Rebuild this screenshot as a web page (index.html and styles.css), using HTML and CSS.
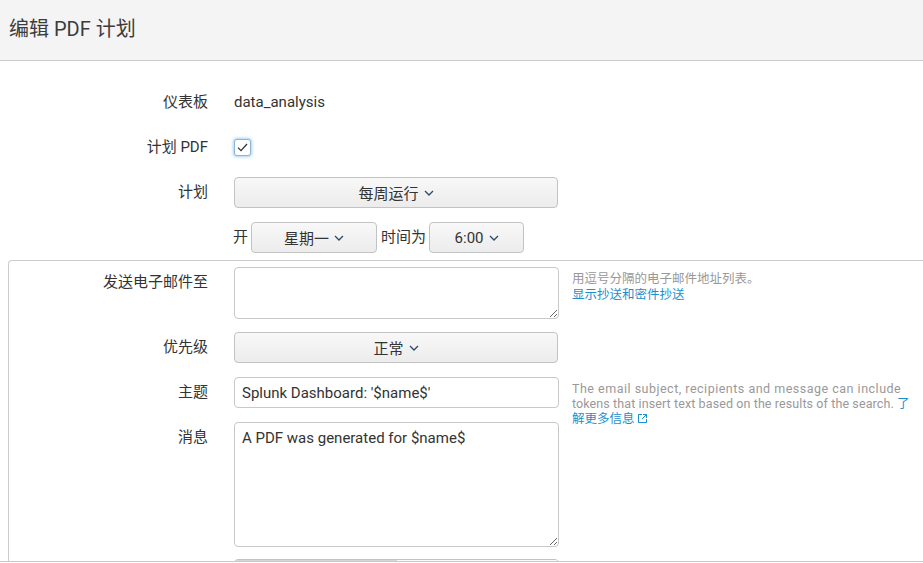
FILE: index.html
```
<!DOCTYPE html>
<html lang="zh-CN">
<head>
    <meta charset="UTF-8">
    <meta name="viewport" content="width=device-width, initial-scale=1.0">
    <title>编辑 PDF 计划</title>
    <link rel="stylesheet" href="styles.css">
</head>
<body>
    <div class="modal">
        <div class="modal-header">
            <h2>编辑 PDF 计划</h2>
        </div>

        <div class="modal-body">
            <div class="row">
                <div class="label">仪表板</div>
                <div class="value">data_analysis</div>
            </div>

            <div class="row">
                <div class="label">计划 PDF</div>
                <div class="value">
                    <span class="checkbox">
                        <svg width="11" height="9" viewBox="0 0 11 9"><path d="M1 4.6l3 3L10 1" fill="none" stroke="#333" stroke-width="1.3"/></svg>
                    </span>
                </div>
            </div>

            <div class="row">
                <div class="label">计划</div>
                <button class="dropdown wide">每周运行 <svg class="caret" width="10" height="6" viewBox="0 0 10 6"><path d="M1 1l4 4 4-4" fill="none" stroke="#2b4a6a" stroke-width="1.3"/></svg></button>
            </div>

            <div class="row last">
                <div class="label"></div>
                <div class="inline">
                    <span class="word">开</span>
                    <button class="dropdown day">星期一 <svg class="caret" width="10" height="6" viewBox="0 0 10 6"><path d="M1 1l4 4 4-4" fill="none" stroke="#2b4a6a" stroke-width="1.3"/></svg></button>
                    <span class="word">时间为</span>
                    <button class="dropdown time">6:00 <svg class="caret" width="10" height="6" viewBox="0 0 10 6"><path d="M1 1l4 4 4-4" fill="none" stroke="#2b4a6a" stroke-width="1.3"/></svg></button>
                </div>
            </div>

            <div class="panel">
                <div class="row">
                    <div class="label">发送电子邮件至</div>
                    <textarea class="field email"></textarea>
                    <div class="help">
                        用逗号分隔的电子邮件地址列表。<br>
                        <a href="#">显示抄送和密件抄送</a>
                    </div>
                </div>

                <div class="row">
                    <div class="label">优先级</div>
                    <button class="dropdown wide">正常 <svg class="caret" width="10" height="6" viewBox="0 0 10 6"><path d="M1 1l4 4 4-4" fill="none" stroke="#2b4a6a" stroke-width="1.3"/></svg></button>
                </div>

                <div class="row">
                    <div class="label">主题</div>
                    <input class="field" type="text" value="Splunk Dashboard: '$name$'">
                    <div class="help tokens">
                        <span class="en wide-line">The email subject, recipients and message can include</span><br><span class="en">tokens that insert text based on the results of the search.</span> <a href="#">了<br>解更多信息 <svg width="9" height="9" viewBox="0 0 9 9"><path d="M4 0.5H0.5v8h8V5" fill="none" stroke="#1a8fcf" stroke-width="1"/><path d="M5 0.5h3.5V4M8.5 0.5L4 5" fill="none" stroke="#1a8fcf" stroke-width="1"/></svg></a>
                    </div>
                </div>

                <div class="row">
                    <div class="label">消息</div>
                    <textarea class="field message">A PDF was generated for $name$</textarea>
                </div>

                <div class="row">
                    <div class="label"></div>
                    <div class="segmented">
                        <span class="seg on"></span>
                        <span class="seg"></span>
                    </div>
                </div>
            </div>
        </div>

        <div class="modal-footer"></div>
    </div>
</body>
</html>
```

FILE: styles.css
```
body {
    margin: 0;
    padding: 0;
    font-family: Roboto, "Noto Sans CJK SC", sans-serif;
    font-size: 15px;
    color: #333;
    background-color: #fff;
    overflow: hidden;
}

.modal {
    height: 563px;
    display: flex;
    flex-direction: column;
    overflow: hidden;
}

.modal-header {
    height: 60px;
    background-color: #f4f4f4;
    border-bottom: 1px solid #ccc;
    padding-left: 9px;
    display: flex;
    align-items: center;
    flex-shrink: 0;
}

.modal-header h2 {
    margin: 0 0 6px 0;
    font-size: 20px;
    font-weight: normal;
    color: #3c3c3c;
}

.modal-body {
    flex: 1;
    overflow: hidden;
    padding-top: 26px;
}

.modal-footer {
    height: 1px;
    border-top: 1px solid #c8c8c8;
    background-color: #fff;
    flex-shrink: 0;
}

.row {
    display: flex;
    align-items: flex-start;
    height: 31px;
    margin-bottom: 14px;
}

.row.last {
    margin-bottom: 7px;
}

.label {
    width: 234px;
    flex-shrink: 0;
    box-sizing: border-box;
    padding-right: 26px;
    text-align: right;
    line-height: 31px;
    color: #333;
}

.value {
    line-height: 31px;
    height: 31px;
    display: flex;
    align-items: center;
}

.checkbox {
    width: 15px;
    height: 15px;
    border: 1px solid #8fb3d3;
    border-radius: 3px;
    background-color: #fff;
    box-shadow: 0 0 3px 1px rgba(82, 168, 236, 0.5);
    display: flex;
    align-items: center;
    justify-content: center;
}

.dropdown {
    height: 31px;
    padding: 0 10px;
    font-family: Roboto, "Noto Sans CJK SC", sans-serif;
    font-size: 15px;
    color: #333;
    border: 1px solid #c3c3c3;
    border-radius: 4px;
    background: linear-gradient(#f8f8f8, #ececec);
    cursor: pointer;
    display: flex;
    align-items: center;
    justify-content: center;
    gap: 5px;
}

.caret {
    margin-top: 1px;
}

.wide {
    width: 324px;
}

.inline {
    display: flex;
    align-items: center;
    margin-left: -1px;
}

.word {
    line-height: 31px;
}

.day {
    width: 126px;
    margin: 0 4px 0 3px;
}

.time {
    width: 95px;
    margin-left: 3px;
}

.panel {
    border: 1px solid #ccc;
    border-right: none;
    border-radius: 4px 0 0 0;
    margin-left: 8px;
    padding-top: 6px;
}

.panel .label {
    width: 225px;
}

.field {
    width: 325px;
    box-sizing: border-box;
    border: 1px solid #c8c8c8;
    border-radius: 4px;
    font-family: Roboto, "Noto Sans CJK SC", sans-serif;
    font-size: 15px;
    color: #333;
    padding: 6px 7px;
    flex-shrink: 0;
    margin: 0;
}

input.field {
    height: 31px;
    padding: 0 7px;
}

.email {
    height: 52px;
    resize: vertical;
}

.message {
    height: 125px;
    padding-top: 6px;
    resize: vertical;
}

.panel .row:nth-child(1) {
    height: 52px;
    margin-bottom: 13px;
}

.panel .row:nth-child(4) {
    height: 125px;
    margin-bottom: 12px;
}

.help {
    margin-left: 13px;
    margin-top: 4px;
    font-size: 12.5px;
    line-height: 16px;
    color: #999;
    white-space: nowrap;
}

.help.tokens {
    line-height: 15px;
    margin-top: 4px;
}

.help .en {
    letter-spacing: 0.1px;
}

.help .en.wide-line {
    letter-spacing: 0.5px;
}

.help a {
    color: #1a8fcf;
    text-decoration: none;
}

.segmented {
    width: 325px;
    height: 30px;
    border: 1px solid #c3c3c3;
    border-radius: 4px;
    display: flex;
    overflow: hidden;
    box-sizing: border-box;
}

.seg {
    flex: 1;
    background-color: #fafafa;
}

.seg.on {
    background-color: #d6d6d6;
}
```
